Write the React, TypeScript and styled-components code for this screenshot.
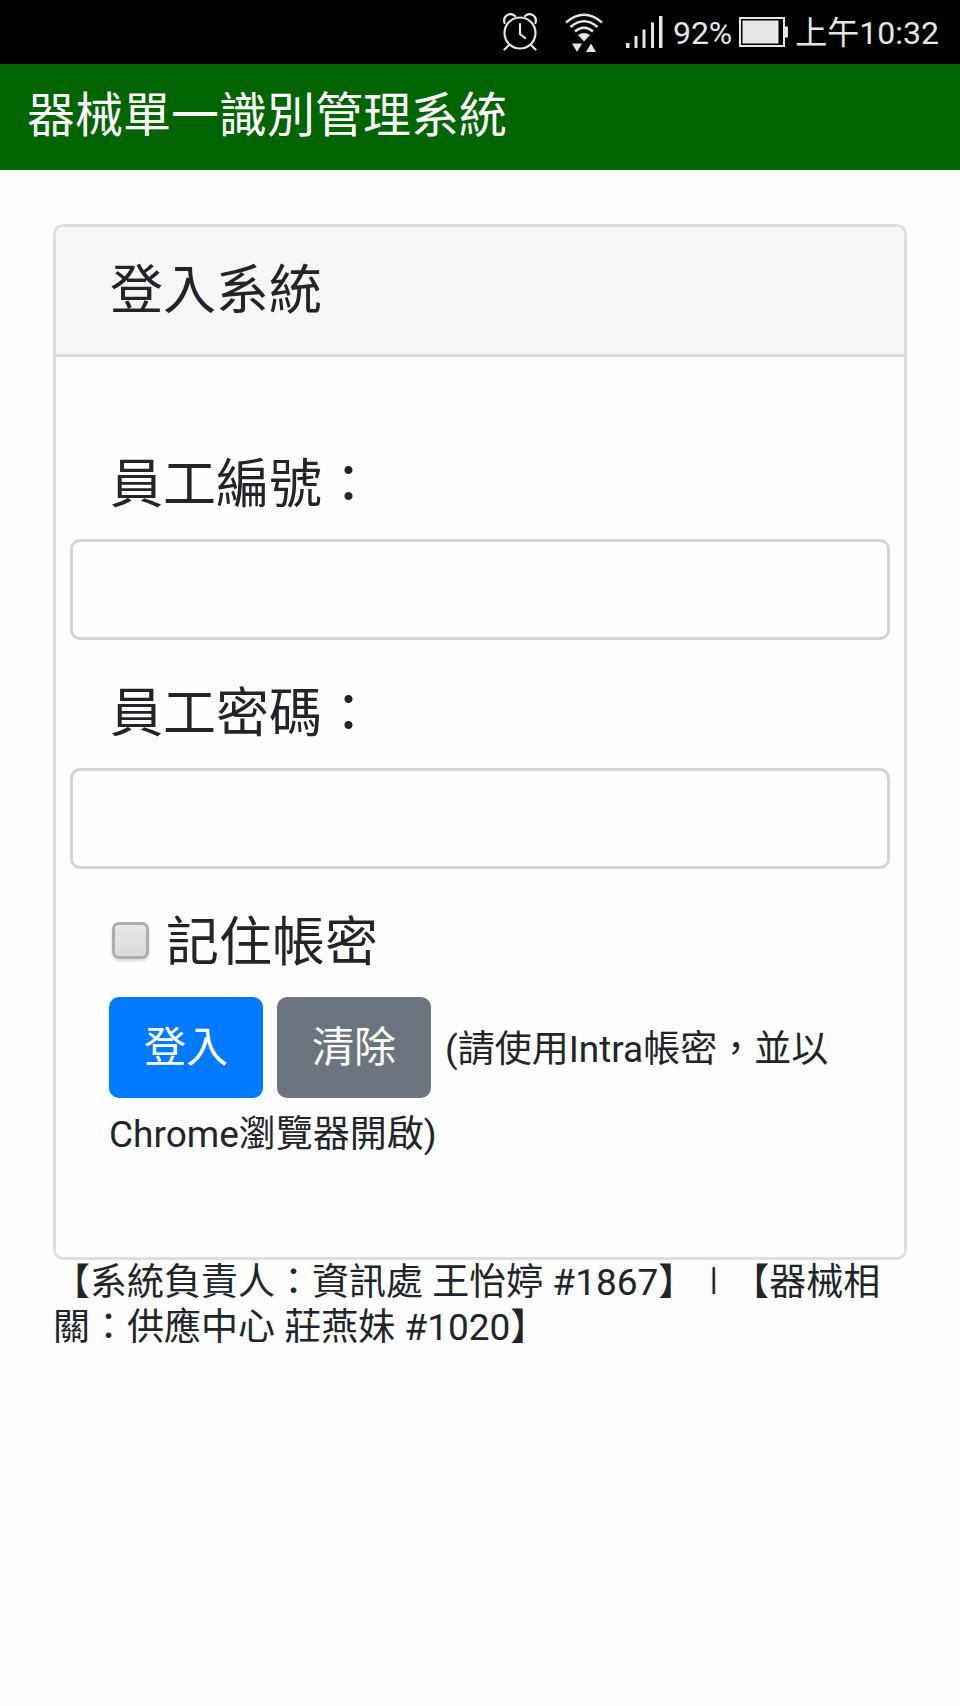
import React from 'react';
import styled, { createGlobalStyle } from 'styled-components';

const GlobalStyle = createGlobalStyle`
  *, *::before, *::after { box-sizing: border-box; }
  body {
    margin: 0;
    background: #fefefe;
    color: #212529;
    font-family: Roboto, "Noto Sans CJK TC", sans-serif;
    font-size: 37px;
    line-height: 45px;
  }
`;

const StatusBar = styled.div`
  display: flex;
  align-items: center;
  justify-content: flex-end;
  height: 64px;
  padding-right: 21px;
  background: #000;
  color: #e6e6e6;
  font-size: 32px;
  line-height: 40px;
`;

const StatusIcon = styled.svg<{ $gap: number }>`
  flex: none;
  margin-right: ${(p) => p.$gap}px;
`;

const StatusText = styled.span`
  padding-top: 2px;
`;

const BatteryLevel = styled(StatusText)`
  margin-right: 7px;
`;

const AppBar = styled.header`
  padding: 16px 27px 18px;
  background: #006400;
`;

const AppTitle = styled.h1`
  margin: 0;
  color: #fff;
  font-size: 48px;
  font-weight: 400;
  line-height: 72px;
`;

const Page = styled.main`
  padding: 54px 53px 0;
`;

const Card = styled.section`
  border: 3px solid #dfdfdf;
  border-radius: 10px;
  background: #fefefe;
`;

const CardHeader = styled.div`
  padding: 24px 54px 23px;
  border-bottom: 3px solid #dadada;
  border-radius: 7px 7px 0 0;
  background: #f6f6f6;
`;

const CardTitle = styled.h2`
  margin: 0;
  font-size: 53px;
  font-weight: 400;
  line-height: 80px;
`;

const LoginForm = styled.form`
  padding: 88px 14px 85px;
`;

const Field = styled.div`
  margin-bottom: 34px;
`;

const FieldLabel = styled.label`
  display: block;
  margin-bottom: 14px;
  padding: 0 40px;
  font-size: 53px;
  line-height: 80px;
`;

const TextInput = styled.input`
  display: block;
  width: 100%;
  height: 101px;
  padding: 16px 32px;
  border: 3px solid #d0d4d7;
  border-radius: 10px;
  background: #fefefe;
  color: #495057;
  font: inherit;
  font-size: 42px;
`;

const RememberRow = styled.label`
  display: flex;
  align-items: center;
  gap: 17px;
  margin-bottom: 14px;
  padding: 0 42px;
  font-size: 53px;
  line-height: 80px;
`;

const Checkbox = styled.input`
  appearance: none;
  flex: none;
  width: 37px;
  height: 37px;
  margin: 0 0 6px;
  border: 3px solid #adadad;
  border-radius: 7px;
  background: linear-gradient(#e8e8e8, #dadada);
  box-shadow: 0 2px 3px rgba(0, 0, 0, 0.15);

  &:checked { background: #007bff; }
`;

const Actions = styled.div`
  padding: 0 39px;
  line-height: 74px;
`;

const Button = styled.button<{ $color: string }>`
  height: 101px;
  margin-right: 14px;
  padding: 0 35px;
  border: 0;
  border-radius: 10px;
  background: ${(p) => p.$color};
  color: #fff;
  font: inherit;
  font-size: 42px;
  line-height: 64px;
`;

const Contacts = styled.footer``;

function AlarmIcon() {
  return (
    <StatusIcon $gap={28} width="34" height="38" viewBox="0 0 34 38" fill="none" stroke="#e6e6e6" strokeWidth="2.2" strokeLinecap="round" aria-hidden="true">
      <circle cx="17" cy="20" r="15.500" />
      <path d="M17 11v10l5 4" />
      <path d="M1.500 10C-.5 3 7-1.500 12 3M32.500 10C34.500 3 27-1.500 22 3" />
      <path d="M6 32l-4.500 4.500M28 32l4.500 4.500" />
    </StatusIcon>
  );
}

function WifiIcon() {
  return (
    <StatusIcon $gap={23} width="38" height="40" viewBox="0 0 38 40" fill="none" stroke="#e6e6e6" strokeWidth="2.600" aria-hidden="true">
      <path d="M1 10.500Q19-5 37 10.500" />
      <path d="M5.500 15Q19 3.500 32.500 15" />
      <path d="M10 19.500Q19 12 28 19.500" />
      <path d="M13 23Q19 19 25 23L19 29.500Z" fill="#e6e6e6" stroke="none" />
      <path d="M7 31.500h10l-5 8.500zM21 40l5-8.500 5 8.500z" fill="#e6e6e6" stroke="none" />
    </StatusIcon>
  );
}

function SignalIcon() {
  return (
    <StatusIcon $gap={10} width="37" height="32" viewBox="0 0 37 32" fill="#e6e6e6" aria-hidden="true">
      <path d="M0 27h3.500v5H0zM8.500 20h3v12h-3zM16.500 13.500h3V32h-3zM25 6.500h3V32h-3zM33 0h3.500v32H33z" />
    </StatusIcon>
  );
}

function BatteryIcon() {
  return (
    <StatusIcon $gap={7} width="49" height="30" viewBox="0 0 49 30" aria-hidden="true">
      <rect x="1" y="1" width="44" height="28" fill="none" stroke="#e6e6e6" strokeWidth="2" />
      <path d="M3.500 3.500h36v23h-36zM46 9.500h3v11h-3z" fill="#e6e6e6" />
    </StatusIcon>
  );
}

export default function App() {
  return (
    <>
      <GlobalStyle />
      <StatusBar>
        <AlarmIcon />
        <WifiIcon />
        <SignalIcon />
        <BatteryLevel>92%</BatteryLevel>
        <BatteryIcon />
        <StatusText>上午10:32</StatusText>
      </StatusBar>
      <AppBar>
        <AppTitle>器械單一識別管理系統</AppTitle>
      </AppBar>
      <Page>
        <Card>
          <CardHeader>
            <CardTitle>登入系統</CardTitle>
          </CardHeader>
          <LoginForm onSubmit={(e) => e.preventDefault()}>
            <Field>
              <FieldLabel htmlFor="employee-id">員工編號：</FieldLabel>
              <TextInput id="employee-id" type="text" autoComplete="username" />
            </Field>
            <Field>
              <FieldLabel htmlFor="employee-password">員工密碼：</FieldLabel>
              <TextInput id="employee-password" type="password" autoComplete="current-password" />
            </Field>
            <RememberRow>
              <Checkbox type="checkbox" />
              記住帳密
            </RememberRow>
            <Actions>
              <Button type="submit" $color="#007bff">登入</Button>
              <Button type="reset" $color="#6c757d">清除</Button>
              <span>(請使用Intra帳密，並以Chrome瀏覽器開啟)</span>
            </Actions>
          </LoginForm>
        </Card>
        <Contacts>
          【系統負責人：資訊處 王怡婷 #1867】∣【器械相關：供應中心 莊燕妹 #1020】
        </Contacts>
      </Page>
    </>
  );
}
